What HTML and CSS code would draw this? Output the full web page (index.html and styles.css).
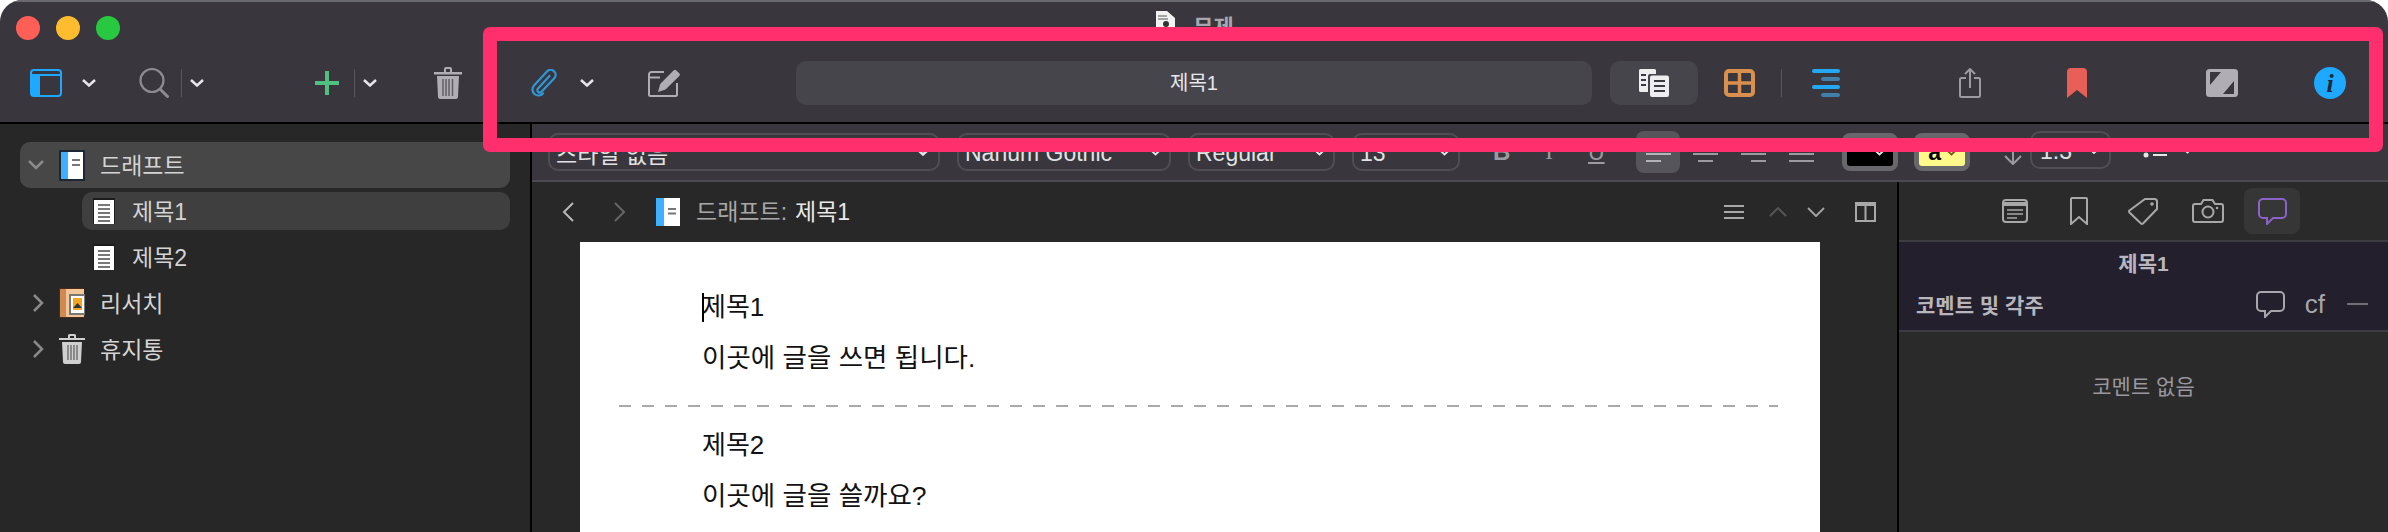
FILE: index.html
```html
<!DOCTYPE html>
<html lang="ko">

<head>
    <meta charset="UTF-8">
    <title>무제</title>
    <link rel="stylesheet" href="styles.css">
</head>

<body>
    <div class="window">
        <header class="head">
            <div class="titlebar">
                <div class="lights">
                    <span class="light light-red"></span>
                    <span class="light light-yellow"></span>
                    <span class="light light-green"></span>
                </div>
                <div class="window-title">
                    <svg class="title-icon" viewBox="0 0 23 17"><path d="M2 0h11l8 7v10H2z" fill="#f2f2f2"/><path d="M4 5h9M4 8h10" stroke="#8a8a8a" stroke-width="1.5"/><circle cx="12" cy="13" r="3" fill="#333"/></svg>
                    <span>무제</span>
                </div>
            </div>
            <div class="toolbar">
                <svg class="tb-panel" width="32" height="28" viewBox="0 0 32 28"><rect x="1" y="1" width="30" height="26" rx="3" fill="none" stroke="#1fa8ff" stroke-width="2"/><path d="M1 6h30" stroke="#1fa8ff" stroke-width="2"/><path d="M1 6h9v21H4a3 3 0 0 1-3-3z" fill="#1fa8ff"/></svg>
                <svg class="chev tb-chev-a" viewBox="0 0 14 8"><path d="M1 1l6 5.500L13 1"/></svg>
                <svg class="tb-search" width="30" height="30" viewBox="0 0 30 30"><circle cx="13" cy="12.500" r="11.500" fill="none" stroke="#8d8b91" stroke-width="2.200"/><path d="M21 21l7.500 7.500" stroke="#8d8b91" stroke-width="3" stroke-linecap="round"/></svg>
                <span class="sep tb-sep-a"></span>
                <svg class="chev tb-chev-b" viewBox="0 0 14 8"><path d="M1 1l6 5.500L13 1"/></svg>
                <svg class="tb-plus" width="24" height="24" viewBox="0 0 24 24"><path d="M12 0v24M0 12h24" stroke="#4fc07f" stroke-width="4"/></svg>
                <span class="sep tb-sep-b"></span>
                <svg class="chev tb-chev-b" viewBox="0 0 14 8"><path d="M1 1l6 5.500L13 1"/></svg>
                <svg class="tb-trash" width="28" height="32" viewBox="0 0 28 32"><path d="M0 5h28v2.500H0zM10 5V2a2 2 0 0 1 2-2h4a2 2 0 0 1 2 2v3h-2V2h-4v3z" fill="#b0aeb4"/><path d="M3 9h22l-1 20.500a2.500 2.500 0 0 1-2.500 2.500h-15A2.500 2.500 0 0 1 4 29.500z" fill="#b0aeb4"/><path d="M9 12v17M12 12v17M15 12v17M18.500 12v17" stroke="#5c5a60" stroke-width="1.400"/></svg>
                <svg class="tb-clip" width="26" height="28" viewBox="0 0 26 28"><path d="M18.500 7L7 19.500a2.400 2.400 0 0 0 3.500 3.300L23.500 9a5 5 0 0 0-7.500-6.600L3 16.500a6 6 0 0 0 9 8" fill="none" stroke="#2f97d8" stroke-width="2.200" stroke-linecap="round"/></svg>
                <svg class="chev tb-chev-c" viewBox="0 0 14 8"><path d="M1 1l6 5.500L13 1"/></svg>
                <svg class="tb-compose" width="33" height="28" viewBox="0 0 33 28"><path d="M16 3H3.500A2.500 2.500 0 0 0 1 5.500v20A1.500 1.500 0 0 0 2.500 27h25a1.500 1.500 0 0 0 1.500-1.500V14" fill="none" stroke="#b0aeb4" stroke-width="2"/><path d="M1 8.500h11" stroke="#b0aeb4" stroke-width="2"/><path d="M25.500 1.500a2 2 0 0 1 2.800 0l3 2.800a2 2 0 0 1 0 2.800L17.500 20.500 10 23l2.200-8z" fill="#b0aeb4"/></svg>
                <div class="title-field">제목1</div>
                <button class="layout-btn">
                    <svg width="30" height="28" viewBox="0 0 30 28"><path d="M1.500 0h14a1.500 1.500 0 0 1 1.500 1.500V5h-6a2 2 0 0 0-2 2v16H1.500A1.500 1.500 0 0 1 0 21.500v-20A1.500 1.500 0 0 1 1.500 0z" fill="#eeedf0"/><rect x="11" y="6.500" width="19" height="21.500" rx="2" fill="#eeedf0"/><path d="M2 6h5M2 11h5M2 16h5M15 12h11M15 17h11M15 22h11" stroke="#3c3a41" stroke-width="2"/></svg>
                </button>
                <svg class="tb-grid" width="31" height="28" viewBox="0 0 31 28"><rect x="2" y="2" width="27" height="24" rx="3" fill="none" stroke="#d98f4e" stroke-width="4"/><path d="M15.500 2v24M2 14h27" stroke="#d98f4e" stroke-width="3.500"/></svg>
                <span class="sep tb-sep-c"></span>
                <svg class="tb-outline" width="28" height="28" viewBox="0 0 28 28"><rect y="0" width="28" height="4" rx="2" fill="#24a8f2"/><rect x="9" y="8" width="19" height="4" rx="2" fill="#3f7fa8"/><rect y="16" width="28" height="4" rx="2" fill="#24a8f2"/><rect x="9" y="24" width="19" height="4" rx="2" fill="#3f7fa8"/></svg>
                <svg class="tb-share" width="22" height="30" viewBox="0 0 22 30"><path d="M7 10H2.500A1.500 1.500 0 0 0 1 11.500v16A1.500 1.500 0 0 0 2.500 29h17a1.500 1.500 0 0 0 1.500-1.500v-16a1.500 1.500 0 0 0-1.500-1.500H15M11 20V1.500M6 6l5-5 5 5" fill="none" stroke="#9d9ba1" stroke-width="2"/></svg>
                <svg class="tb-bookmark" width="20" height="30" viewBox="0 0 20 30"><path d="M0 4a4 4 0 0 1 4-4h12a4 4 0 0 1 4 4v26l-10-8-10 8z" fill="#e85f57"/></svg>
                <svg class="tb-contrast" width="32" height="28" viewBox="0 0 32 28"><rect width="32" height="28" rx="3.500" fill="#b0aeb4"/><path d="M4 3h11L4 16zM28 25H17l11-13z" fill="#39373d"/></svg>
                <svg class="tb-info" width="32" height="32" viewBox="0 0 32 32"><circle cx="16" cy="16" r="16" fill="#1fa8ff"/><text x="16" y="25" class="info-glyph" text-anchor="middle">i</text></svg>
            </div>
        </header>

        <div class="main">
            <nav class="sidebar">
                <div class="row row-top row-draft">
                    <svg class="twist twist-open" viewBox="0 0 16 10"><path d="M1 1l7 7 7-7"/></svg>
                    <svg class="row-icon" width="26" height="31" viewBox="0 0 26 31"><rect width="26" height="31" fill="#1c2733"/><rect x="2" y="2" width="7" height="27" fill="#3fb0ff"/><rect x="9" y="2" width="15" height="27" fill="#fff"/><path d="M13 10h8M13 15h8" stroke="#777" stroke-width="2"/></svg>
                    <span>드래프트</span>
                </div>
                <div class="row row-child row-selected">
                    <svg class="row-icon" width="22" height="26" viewBox="0 0 22 26"><rect width="22" height="26" fill="#1c1c1c"/><rect x="1" y="2" width="20" height="24" fill="#fff"/><path d="M5 7h12M5 11h12M5 15h12M5 19h12M5 23h12" stroke="#777" stroke-width="2"/></svg>
                    <span>제목1</span>
                </div>
                <div class="row row-child">
                    <svg class="row-icon" width="22" height="26" viewBox="0 0 22 26"><rect width="22" height="26" fill="#1c1c1c"/><rect x="1" y="2" width="20" height="24" fill="#fff"/><path d="M5 7h12M5 11h12M5 15h12M5 19h12M5 23h12" stroke="#777" stroke-width="2"/></svg>
                    <span>제목2</span>
                </div>
                <div class="row row-top">
                    <svg class="twist" viewBox="0 0 12 18"><path d="M2 1l8 8-8 8"/></svg>
                    <svg class="row-icon" width="26" height="30" viewBox="0 0 26 30"><rect width="25" height="30" fill="#4a2a14"/><rect x="1" y="1" width="6" height="28" fill="#cf8a52"/><rect x="7" y="1" width="18" height="28" fill="#f3c79a"/><rect x="11" y="7" width="15" height="19" fill="#fff" stroke="#777" stroke-width="2"/><rect x="14" y="10" width="9" height="12" fill="#f5a623"/><path d="M14 20l4.500-5 4.500 5z" fill="#333"/></svg>
                    <span>리서치</span>
                </div>
                <div class="row row-top">
                    <svg class="twist" viewBox="0 0 12 18"><path d="M2 1l8 8-8 8"/></svg>
                    <svg class="row-icon" width="26" height="30" viewBox="0 0 26 30"><path d="M0 4h26v2H0zM9 4V1.500A1.500 1.500 0 0 1 10.500 0h5A1.500 1.500 0 0 1 17 1.500V4h-2V2h-4v2z" fill="#cfcfcf"/><path d="M3 8h20l-1 20a2 2 0 0 1-2 2H6a2 2 0 0 1-2-2z" fill="#cfcfcf"/><path d="M9 11v15M12 11v15M15 11v15M18 11v15" stroke="#666" stroke-width="1.300"/></svg>
                    <span>휴지통</span>
                </div>
            </nav>

            <div class="workspace">
                <div class="format-bar">
                    <div class="popup popup-style">
                        <span>스타일 없음</span>
                        <svg class="popup-chev" viewBox="0 0 14 8"><path d="M1 1l6 5.500L13 1"/></svg>
                    </div>
                    <div class="popup popup-font">
                        <span>Nanum Gothic</span>
                        <svg class="popup-chev small" viewBox="0 0 14 8"><path d="M1 1l6 5.500L13 1"/></svg>
                    </div>
                    <div class="popup popup-weight">
                        <span>Regular</span>
                        <svg class="popup-chev small" viewBox="0 0 14 8"><path d="M1 1l6 5.500L13 1"/></svg>
                    </div>
                    <div class="popup popup-size">
                        <span>13</span>
                        <svg class="popup-chev small" viewBox="0 0 14 8"><path d="M1 1l6 5.500L13 1"/></svg>
                    </div>
                    <span class="style-btn style-bold">B</span>
                    <span class="style-btn style-italic">I</span>
                    <span class="style-btn style-under">U</span>
                    <div class="align-btn align-active">
                        <svg width="25" height="24" viewBox="0 0 25 24"><path d="M0 7h25M0 14h25M0 21h15" stroke="#b5b3b9" stroke-width="2"/></svg>
                    </div>
                    <div class="align-btn align-center">
                        <svg width="25" height="24" viewBox="0 0 25 24"><path d="M0 7h25M0 14h25M5 21h15" stroke="#9d9ba1" stroke-width="2"/></svg>
                    </div>
                    <div class="align-btn align-right">
                        <svg width="25" height="24" viewBox="0 0 25 24"><path d="M0 7h25M0 14h25M10 21h15" stroke="#9d9ba1" stroke-width="2"/></svg>
                    </div>
                    <div class="align-btn align-just">
                        <svg width="25" height="24" viewBox="0 0 25 24"><path d="M0 7h25M0 14h25M0 21h25" stroke="#9d9ba1" stroke-width="2"/></svg>
                    </div>
                    <div class="swatch swatch-text">
                        <svg class="swatch-chev" viewBox="0 0 14 8"><path d="M1 1l6 5.500L13 1"/></svg>
                    </div>
                    <div class="swatch swatch-mark">
                        <span>a</span>
                        <svg class="swatch-chev dark" viewBox="0 0 14 8"><path d="M1 1l6 5.500L13 1"/></svg>
                    </div>
                    <svg class="spacing-icon" width="18" height="26" viewBox="0 0 18 26"><path d="M9 0v25M1 17l8 8 8-8M5 4l4-4 4 4" fill="none" stroke="#9d9ba1" stroke-width="2"/></svg>
                    <div class="popup popup-spacing">
                        <span>1.3</span>
                        <svg class="popup-chev" viewBox="0 0 14 8"><path d="M1 1l6 5.500L13 1"/></svg>
                    </div>
                    <svg class="list-icon" width="24" height="8" viewBox="0 0 24 8"><circle cx="3" cy="5" r="2.500" fill="#e4e4e4"/><path d="M10 5h14" stroke="#e4e4e4" stroke-width="2"/></svg>
                    <svg class="list-chev" viewBox="0 0 14 8"><path d="M1 1l6 5.500L13 1"/></svg>
                </div>

                <div class="panes">
                    <section class="editor">
                        <div class="nav-bar">
                            <svg class="nav-back" width="12" height="20" viewBox="0 0 12 20"><path d="M11 1L2 10l9 9" fill="none" stroke="#b8b8b8" stroke-width="2"/></svg>
                            <svg class="nav-next" width="12" height="20" viewBox="0 0 12 20"><path d="M1 1l9 9-9 9" fill="none" stroke="#666" stroke-width="2"/></svg>
                            <svg class="nav-doc" width="24" height="28" viewBox="0 0 24 28"><rect width="8" height="28" fill="#3fb0ff"/><rect x="8" width="16" height="28" fill="#fff"/><path d="M12 11h8M12 15.500h8" stroke="#777" stroke-width="2"/></svg>
                            <span class="crumb-parent">드래프트:</span>
                            <span class="crumb-current">제목1</span>
                            <div class="nav-tools">
                                <svg width="20" height="14" viewBox="0 0 20 14"><path d="M0 1h20M0 7h20M0 13h20" stroke="#a8a8a8" stroke-width="2"/></svg>
                                <svg class="nav-up" width="18" height="10" viewBox="0 0 18 10"><path d="M1 9l8-8 8 8" fill="none" stroke="#555" stroke-width="2"/></svg>
                                <svg class="nav-down" width="18" height="10" viewBox="0 0 18 10"><path d="M1 1l8 8 8-8" fill="none" stroke="#a0a0a0" stroke-width="2"/></svg>
                                <svg class="nav-split" width="21" height="20" viewBox="0 0 21 20"><rect x="1" y="1" width="19" height="18" fill="none" stroke="#a8a8a8" stroke-width="2"/><path d="M10.500 1v18M1 3h19" stroke="#a8a8a8" stroke-width="2"/></svg>
                            </div>
                        </div>
                        <div class="page">
                            <p class="line line-title"><span class="caret"></span>제목1</p>
                            <p class="line">이곳에 글을 쓰면 됩니다.</p>
                            <div class="doc-break"></div>
                            <p class="line line-title">제목2</p>
                            <p class="line">이곳에 글을 쓸까요?</p>
                        </div>
                    </section>

                    <aside class="inspector">
                        <div class="tabs">
                            <svg class="tab-note" width="26" height="24" viewBox="0 0 26 24"><rect x="1" y="1" width="24" height="22" rx="3" fill="none" stroke="#a8a8a8" stroke-width="2"/><path d="M1 5h24" stroke="#a8a8a8" stroke-width="4"/><path d="M5 11h16M5 15h16M5 19h10" stroke="#a8a8a8" stroke-width="1.500"/></svg>
                            <svg class="tab-mark" width="18" height="28" viewBox="0 0 18 28"><path d="M2 1h14a1 1 0 0 1 1 1v25l-8-7-8 7V2a1 1 0 0 1 1-1z" fill="none" stroke="#a8a8a8" stroke-width="2"/></svg>
                            <svg class="tab-tag" width="30" height="28" viewBox="0 0 30 28"><path d="M17 2h9.500A2.500 2.500 0 0 1 29 4.500V12L15 26.500a1.500 1.500 0 0 1-2 0L1.500 15.500a1.500 1.500 0 0 1 0-2z" fill="none" stroke="#a8a8a8" stroke-width="2"/><circle cx="24" cy="7" r="1.800" fill="#a8a8a8"/></svg>
                            <svg class="tab-cam" width="32" height="24" viewBox="0 0 32 24"><path d="M3 5h6l2.500-4h9L23 5h6a2 2 0 0 1 2 2v14a2 2 0 0 1-2 2H3a2 2 0 0 1-2-2V7a2 2 0 0 1 2-2z" fill="none" stroke="#a8a8a8" stroke-width="2"/><circle cx="16" cy="13" r="5.500" fill="none" stroke="#a8a8a8" stroke-width="2"/><circle cx="25" cy="9" r="1.300" fill="#a8a8a8"/></svg>
                            <div class="tab-active">
                                <svg width="29" height="27" viewBox="0 0 29 27"><path d="M5 1h19a4 4 0 0 1 4 4v11a4 4 0 0 1-4 4H15l-6 6v-6H5a4 4 0 0 1-4-4V5a4 4 0 0 1 4-4z" fill="none" stroke="#8b63c9" stroke-width="2"/></svg>
                            </div>
                        </div>
                        <div class="notes-head">
                            <div class="notes-title">제목1</div>
                            <div class="notes-row">
                                <span class="notes-label">코멘트 및 각주</span>
                                <svg class="notes-add" width="29" height="27" viewBox="0 0 29 27"><path d="M5 1h19a4 4 0 0 1 4 4v11a4 4 0 0 1-4 4H15l-6 6v-6H5a4 4 0 0 1-4-4V5a4 4 0 0 1 4-4z" fill="none" stroke="#a8a6ac" stroke-width="2"/></svg>
                                <span class="notes-cf">cf</span>
                                <span class="notes-minus"></span>
                            </div>
                        </div>
                        <div class="notes-empty">코멘트 없음</div>
                    </aside>
                </div>
            </div>
        </div>

        <div class="callout"></div>
    </div>
</body>

</html>
```

FILE: styles.css
```css
html,
body {
    margin: 0;
    height: 100%;
    overflow: hidden;
    background: #ffffff;
}

body,
button {
    font-family: "Liberation Sans", "Noto Sans CJK KR", sans-serif;
}

svg {
    display: block;
    flex: none;
}

.window {
    position: relative;
    width: 2388px;
    height: 532px;
    overflow: hidden;
    border-radius: 22px 22px 0 0;
    background: #39373d;
}

.head {
    height: 120px;
    border-top: 2px solid #6a696d;
    border-bottom: 2px solid #000000;
}

.titlebar {
    height: 59px;
    display: grid;
    grid-template-columns: 1fr auto 1fr;
}

.lights {
    display: flex;
    gap: 16px;
    padding: 14px 0 0 16px;
}

.light {
    width: 24px;
    height: 24px;
    border-radius: 50%;
}

.light-red {
    background: #ff5f57;
}

.light-yellow {
    background: #febc2e;
}

.light-green {
    background: #28c840;
}

.window-title {
    display: flex;
    gap: 16px;
    padding-top: 9px;
    color: #a9a7ad;
    font-size: 22px;
    font-weight: bold;
    line-height: 26px;
}

.window-title span {
    padding-top: 4px;
}

.title-icon {
    width: 23px;
    height: 17px;
}

.toolbar {
    height: 44px;
    display: flex;
    align-items: center;
}

.chev {
    width: 14px;
    height: 8px;
}

.chev path,
.popup-chev path,
.swatch-chev path,
.list-chev path {
    fill: none;
    stroke: #e6e6e8;
    stroke-width: 2.500;
}

.sep {
    width: 1px;
    height: 28px;
    background: #58565c;
}

.tb-panel {
    margin-left: 30px;
}

.tb-chev-a {
    margin-left: 20px;
}

.tb-search {
    margin-left: 43px;
}

.tb-sep-a {
    margin-left: 12px;
}

.tb-chev-b {
    margin-left: 8px;
}

.tb-plus {
    margin-left: 111px;
}

.tb-sep-b {
    margin-left: 15px;
}

.tb-trash {
    margin-left: 57px;
}

.tb-clip {
    margin-left: 69px;
}

.tb-chev-c {
    margin-left: 23px;
}

.tb-compose {
    margin-left: 54px;
}

.title-field {
    width: 796px;
    height: 44px;
    margin-left: 115px;
    border-radius: 10px;
    background: #47454c;
    color: #e8e8ea;
    font-size: 20px;
    line-height: 44px;
    text-align: center;
}

.layout-btn {
    width: 88px;
    height: 44px;
    margin-left: 18px;
    padding: 0;
    border: 0;
    border-radius: 10px;
    background: #47454c;
    display: flex;
    align-items: center;
    justify-content: center;
}

.tb-grid {
    margin-left: 26px;
}

.tb-sep-c {
    margin-left: 26px;
}

.tb-outline {
    margin-left: 30px;
}

.tb-share {
    margin-left: 119px;
}

.tb-bookmark {
    margin-left: 86px;
}

.tb-contrast {
    margin-left: 119px;
}

.tb-info {
    margin-left: 76px;
}

.info-glyph {
    font-family: "Liberation Serif", serif;
    font-size: 26px;
    font-style: italic;
    font-weight: bold;
    fill: #1d2a36;
}

.main {
    height: 408px;
    display: flex;
}

.sidebar {
    width: 530px;
    flex: none;
    padding-top: 18px;
    border-right: 2px solid #000000;
    background: #272727;
    color: #d4d4d4;
    font-size: 23px;
}

.row {
    height: 38px;
    margin: 0 20px 8px 0;
    display: flex;
    align-items: center;
    border-radius: 10px;
}

.row span {
    padding-bottom: 2px;
}

.row-top {
    padding-left: 32px;
}

.row-top .row-icon {
    margin-left: 15px;
    margin-right: 15px;
}

.row-draft {
    height: 46px;
    margin-left: 20px;
    margin-bottom: 4px;
    padding-left: 8px;
    background: #474747;
}

.row-draft .row-icon {
    margin-left: 15px;
}

.row-child {
    margin-left: 82px;
    padding-left: 11px;
}

.row-child .row-icon {
    margin-right: 17px;
}

.row-selected {
    background: #3f3f3f;
}

.twist {
    width: 12px;
    height: 18px;
    fill: none;
    stroke: #8a8a8a;
    stroke-width: 2.500;
}

.twist-open {
    width: 16px;
    height: 10px;
}

.workspace {
    flex: 1;
    min-width: 0;
    display: flex;
    flex-direction: column;
}

.format-bar {
    height: 56px;
    flex: none;
    display: flex;
    align-items: center;
    border-bottom: 2px solid #4b4a50;
    background: #39373d;
    color: #e2e2e4;
    font-size: 23px;
}

.popup {
    height: 38px;
    box-sizing: border-box;
    display: flex;
    align-items: center;
    justify-content: space-between;
    padding: 0 8px 0 6px;
    border: 2px solid #504e55;
    border-radius: 10px;
}

.popup span {
    padding-top: 2px;
}

.popup-chev {
    width: 14px;
    height: 8px;
}

.popup-chev.small {
    width: 11px;
    height: 7px;
}

.popup-style {
    width: 392px;
    margin-left: 16px;
}

.popup-font {
    width: 214px;
    margin-left: 17px;
}

.popup-weight {
    width: 147px;
    margin-left: 17px;
}

.popup-size {
    width: 108px;
    margin-left: 17px;
}

.style-btn {
    width: 16px;
    color: #9d9ba1;
    text-align: center;
}

.style-bold {
    margin-left: 33px;
    font-weight: bold;
    font-size: 24px;
}

.style-italic {
    margin-left: 32px;
    font-family: "Liberation Serif", serif;
}

.style-under {
    margin-left: 31px;
    text-decoration: underline;
}

.align-btn {
    width: 25px;
    height: 24px;
}

.align-active {
    width: 44px;
    height: 42px;
    margin-left: 32px;
    border-radius: 8px;
    background: #56555b;
    display: flex;
    align-items: center;
    justify-content: center;
}

.align-center {
    margin-left: 13px;
}

.align-right {
    margin-left: 23px;
}

.align-just {
    margin-left: 23px;
}

.swatch {
    width: 56px;
    height: 38px;
    box-sizing: border-box;
    margin-left: 28px;
    padding-right: 8px;
    display: flex;
    align-items: center;
    justify-content: flex-end;
    gap: 5px;
    border: 5px solid #68676b;
    border-radius: 8px;
    background: #000000;
}

.swatch-chev {
    width: 11px;
    height: 7px;
}

.swatch-chev.dark path {
    stroke: #7a5a20;
}

.swatch-mark {
    margin-left: 16px;
    background: #fff98c;
    color: #000000;
    font-weight: bold;
}

.spacing-icon {
    margin-left: 34px;
}

.popup-spacing {
    width: 81px;
    height: 38px;
    margin-left: 8px;
    margin-top: -4px;
    padding-left: 8px;
}

.list-icon {
    margin-left: 32px;
    margin-top: 4px;
}

.list-chev {
    width: 9px;
    height: 6px;
    margin-left: 16px;
    margin-top: -2px;
}

.panes {
    flex: 1;
    min-height: 0;
    display: flex;
}

.editor {
    width: 1365px;
    flex: none;
    background: #282828;
}

.nav-bar {
    height: 60px;
    display: flex;
    align-items: center;
    font-size: 23px;
}

.nav-bar span {
    padding-bottom: 4px;
}

.nav-back {
    margin-left: 30px;
}

.nav-next {
    margin-left: 40px;
}

.nav-doc {
    margin-left: 30px;
    margin-right: 16px;
}

.crumb-parent {
    color: #a8a8a8;
}

.crumb-current {
    margin-left: 8px;
    color: #e8e8e8;
}

.nav-tools {
    margin-left: auto;
    margin-right: 21px;
    display: flex;
    align-items: center;
}

.nav-up {
    margin-left: 25px;
}

.nav-down {
    margin-left: 20px;
}

.nav-split {
    margin-left: 30px;
}

.page {
    width: 1240px;
    height: 290px;
    margin-left: 48px;
    padding-top: 40px;
    box-sizing: border-box;
    background: #ffffff;
    color: #111111;
    font-size: 26.500px;
    line-height: 52px;
}

.line {
    margin: 0 0 0 122px;
}

.line-title {
    font-size: 26px;
    line-height: 50px;
}

.caret {
    display: inline-block;
    width: 2px;
    height: 29px;
    margin-right: -2px;
    vertical-align: -6px;
    background: #000000;
}

.doc-break {
    height: 2px;
    margin: 21px 42px 13px 39px;
    background: repeating-linear-gradient(90deg, #aaaaaa 0, #aaaaaa 12px, transparent 12px, transparent 23px);
}

.inspector {
    flex: 1;
    min-width: 0;
    border-left: 2px solid #000000;
    background: #2a2a2a;
    color: #a8a6ac;
}

.tabs {
    height: 58px;
    display: flex;
    align-items: center;
    border-bottom: 2px solid #3d3c40;
}

.tab-note {
    margin-left: 103px;
}

.tab-mark {
    margin-left: 42px;
}

.tab-tag {
    margin-left: 40px;
}

.tab-cam {
    margin-left: 34px;
}

.tab-active {
    width: 56px;
    height: 46px;
    margin-left: 20px;
    border-radius: 8px;
    background: #363636;
    display: flex;
    align-items: center;
    justify-content: center;
}

.notes-head {
    height: 88px;
    border-bottom: 2px solid #3d3c44;
    background: #231f2d;
}

.notes-title {
    padding-top: 9px;
    color: #b8b6bc;
    font-size: 21px;
    font-weight: bold;
    line-height: 26px;
    text-align: center;
}

.notes-row {
    margin-top: 12px;
    display: flex;
    align-items: center;
}

.notes-label {
    margin-left: 17px;
    color: #b8b6bc;
    font-size: 21px;
    font-weight: bold;
}

.notes-add {
    margin-left: auto;
}

.notes-cf {
    margin-left: 20px;
    font-size: 26px;
    line-height: 26px;
}

.notes-minus {
    width: 21px;
    height: 2px;
    margin: 0 20px 0 22px;
    background: #6f6d75;
}

.notes-empty {
    padding-top: 42px;
    font-size: 21px;
    line-height: 26px;
    text-align: center;
    color: #9a989e;
}

.callout {
    position: absolute;
    top: 27px;
    left: 483px;
    width: 1900px;
    height: 125px;
    box-sizing: border-box;
    border: 14px solid #ff2e6c;
    border-radius: 7px;
}
```
